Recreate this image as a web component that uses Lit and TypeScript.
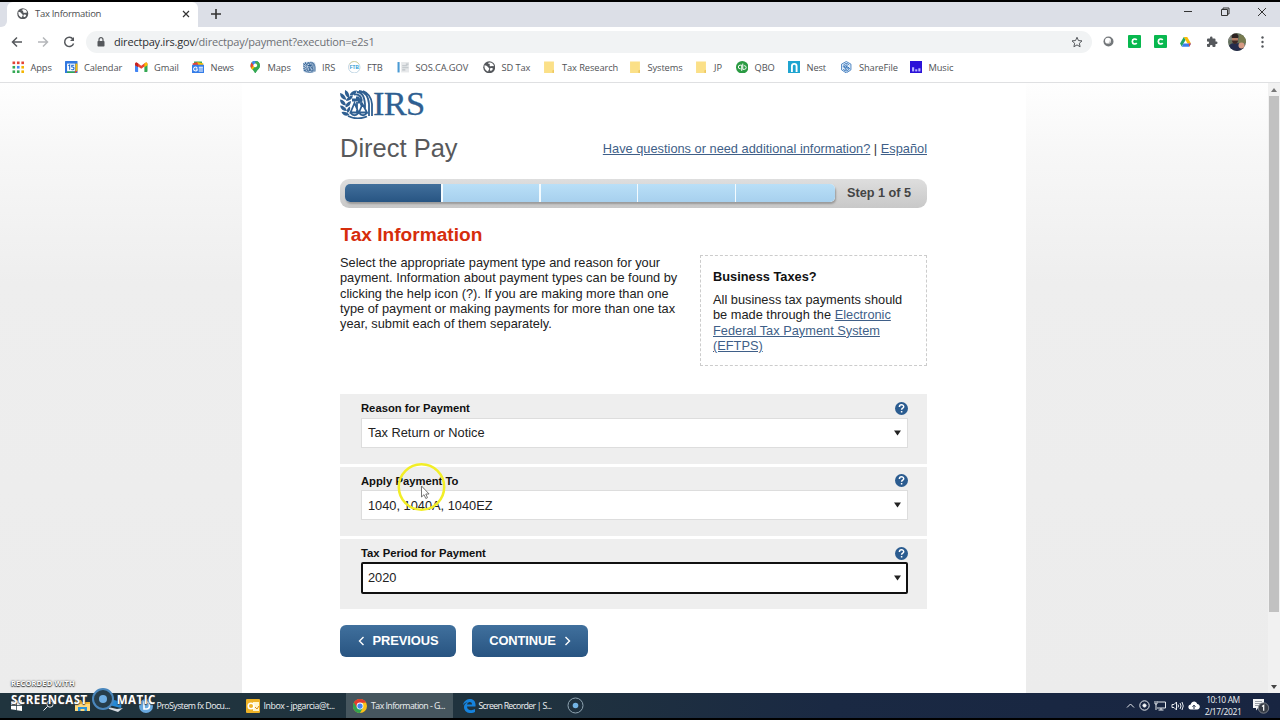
import { LitElement, html, css, svg } from "lit";
import { customElement } from "lit/decorators.js";

const globe = html`<svg viewBox="0 0 24 24"><circle cx="12" cy="12" r="11.5" fill="#55585c"/><path d="M3 8c3 1 5 1 6 3s3 2 3 4-2 2-2 5c-4-1-8-5-7-12zM12 3c4-1 8 2 9 6-2 2-3 0-5 1s-4-1-3-3-3-1-3-2 1-2 2-2z" fill="#fff"/><path d="M14 14c2-1 5 0 5 1s-2 4-4 4-2-4-1-5z" fill="#fff"/></svg>`;
const folder = html`<svg viewBox="0 0 24 24"><path d="M2 1h19v18l-3 4H2z" fill="#fbe088"/><path d="M18 23v-5l3-1v6z" fill="#edc75c"/></svg>`;
const seal = svg`<g fill="#2f5f91"><path d="M0 3q5 1 6.500 7Q0 9 0 3zM5 0q5 2 4 8Q4 6 5 0zM17 .5q-1 5-7.500 5Q11 .5 17 .5zM0 9.500q5 .5 6 6-6-.5-6-6zM13 5.500q-1 5-7 5.500Q7 6 13 5.500zM0 15.500q5 0 7 5.500Q1 21 0 15.500zM11 11q0 5-5.500 6.500Q5 12.500 11 11zM1.500 22q5-1 8 3-5.500 2.500-8-3zM10 16.500q1 4-2.500 6.500-2-4 2.500-6.500z"/><path d="M12 8.500h4V6.500h3l1 2h2.500v3H20v2h-2v-2h-6z"/></g><path d="M17 2q7 0 8 12v5M19 1q9 1 10 13v12M23 1q8 3 9 13v12M14 4.500q5-1 7 3v8M17 12v11M14.500 13L10.500 22.500h8zM22.500 14L19 22.500h8zM10.500 23q4 4.500 8 0M19 23q4 4.500 8 0M8 26q9 4.500 19 .5" fill="none" stroke="#2f5f91" stroke-width="1.800"/>`;

const bookmarks: [string, number, unknown][] = [
  ["Apps", 53.500, html`<svg viewBox="0 0 24 24"><g fill="#e34335"><rect x="1" y="1" width="5" height="5"/><rect x="9.500" y="1" width="5" height="5"/><rect x="18" y="1" width="5" height="5"/></g><rect x="1" y="9.500" width="5" height="5" fill="#33a853"/><rect x="9.500" y="9.500" width="5" height="5" fill="#4285f4"/><rect x="18" y="9.500" width="5" height="5" fill="#f4b400"/><g fill="#f4b400"><rect x="1" y="18" width="5" height="5" fill="#33a853"/><rect x="9.500" y="18" width="5" height="5" fill="#33a853"/><rect x="18" y="18" width="5" height="5"/></g></svg>`],
  ["Calendar", 70, html`<svg viewBox="0 0 24 24"><rect width="24" height="24" rx="1" fill="#3178e0"/><path d="M4 5h15v15H4z" fill="#fff"/><path d="M20 5h4v14h-4z" fill="#fbbc04"/><path d="M4 20h15v4H4z" fill="#34a853"/><path d="M19 19h5l-5 5z" fill="#ea4335"/><path d="M6.500 9l2.500-1.500V17M17.500 8h-4.500v3.500c5.500-1 5.500 5.500 1 5.200l-2-.5" fill="none" stroke="#1967d2" stroke-width="2"/></svg>`],
  ["Gmail", 56.500, html`<svg viewBox="0 0 24 24"><path d="M0 6v13c0 1 1 2 2 2h4V9z" fill="#4285f4"/><path d="M18 9v12h4c1 0 2-1 2-2V6z" fill="#34a853"/><path d="M0 6c0-3 3-4 5-2l7 5 7-5c2-2 5-1 5 2l-12 9z" fill="#ea4335"/><path d="M18 5l1-1c2-2 5-1 5 2v2l-6 4z" fill="#fbbc04"/><path d="M0 6c0-2 2-3 3-3l3 2v7L0 8z" fill="#c5221f"/></svg>`],
  ["News", 57, html`<svg viewBox="0 0 24 24"><path d="M4 1h15l1 8H4z" fill="#34a853"/><path d="M10 2l12 3-2 8H8z" fill="#fbbc04"/><path d="M1 5l9-3 3 8H2z" fill="#ea4335"/><rect y="7" width="24" height="17" rx="1" fill="#357de8"/><path d="M10 13c-3-3-7-1-7 2.500s5 5 7 2v-2H7M13 12h8M13 15.500h8M13 19h8" stroke="#fff" stroke-width="2" fill="none"/></svg>`],
  ["Maps", 54.500, html`<svg viewBox="0 0 24 24"><path d="M12 0C6 0 3 4 3 9c0 6 6 8 9 15 3-7 9-9 9-15 0-5-3-9-9-9z" fill="#34a853"/><path d="M5 3l5 5-6 6C2 10 3 6 5 3z" fill="#ea4335"/><path d="M5 3c3-4 8-4 12-2l-7 8z" fill="#4285f4"/><path d="M4 14l11-12c5 3 3 4-1 7l-8 8z" fill="#fbbc04"/><path d="M12 0c6 0 9 4 9 9 0 6-6 8-9 15l-1-3z" fill="#34a853" opacity=".85"/><circle cx="12" cy="8.500" r="3.500" fill="#fff"/></svg>`],
  ["IRS", 45, html`<svg viewBox="0 0 33 29"><rect width="33" height="29" rx="9" fill="#c5d5e8"/>${seal}</svg>`],
  ["FTB", 48.500, html`<svg viewBox="0 0 24 24"><circle cx="12" cy="12" r="11" fill="#fff" stroke="#aecbdc" stroke-width="1.500"/><path d="M3 6c4-7 14-7 18 0" fill="none" stroke="#d8cf8d" stroke-width="1.500"/><text x="12" y="15.500" text-anchor="middle" font-size="9" font-weight="bold" font-family="Liberation Sans, sans-serif" fill="#2797d2">FTB</text></svg>`],
  ["SOS.CA.GOV", 86, html`<svg viewBox="0 0 24 24"><path d="M1 2h4v20H1z" fill="#4a9ad4"/><path d="M8 2h15v20H8z" fill="#e6e8ea"/><path d="M10 9h10M10 13h12M10 17h6M17 6h5" stroke="#bcc1c6" stroke-width="2"/></svg>`],
  ["SD Tax", 60.500, globe],
  ["Tax Research", 85.500, folder],
  ["Systems", 66.500, folder],
  ["JP", 40.500, folder],
  ["QBO", 52, html`<svg viewBox="0 0 24 24"><circle cx="12" cy="12" r="12" fill="#2b9b43"/><path d="M11 8v11M11 8H8a3.500 3.500 0 000 7h1M13 16V5M13 16h3a3.500 3.500 0 000-7h-1" fill="none" stroke="#fff" stroke-width="1.900"/></svg>`],
  ["Nest", 52.500, html`<svg viewBox="0 0 24 24"><rect width="24" height="24" fill="#1fa4d0"/><path d="M7.500 21V10a4.500 4.500 0 019 0v11" fill="none" stroke="#fff" stroke-width="3.600"/></svg>`],
  ["ShareFile", 69.500, html`<svg viewBox="0 0 24 24"><path d="M12 1l9 5v11l-9 6-9-6V6z" fill="#e6f1fb" stroke="#2669b4" stroke-width="1.500"/><path d="M17.500 8c-2-4-10-4-10 .5 0 5 9 3 9 7.500 0 4-8 4-10 0M14.500 9c-2-2-4-1-4 0 0 2 8 2.500 8 6.500M6 10c0 3 7 4 7 6 0 1-2 1.500-4 0" fill="none" stroke="#2669b4" stroke-width="1.800"/></svg>`],
  ["Music", 60, html`<svg viewBox="0 0 24 24"><rect width="24" height="24" fill="#2b12d8"/><g fill="#b9b4ff"><rect x="4" y="12" width="4" height="8"/><rect x="10" y="16" width="4" height="4"/><rect x="16" y="14" width="4" height="6"/></g></svg>`],
];

const fields: [string, string][] = [
  ["Reason for Payment", "Tax Return or Notice"],
  ["Apply Payment To", "1040, 1040A, 1040EZ"],
  ["Tax Period for Payment", "2020"],
];

const greenC = html`<svg class="gc" viewBox="0 0 13 13"><rect width="13" height="13" rx="1" fill="#08b84f"/><path d="M8.700 5C7.500 3.300 4.300 3.800 4.300 6.500s3.200 3.200 4.400 1.500" fill="none" stroke="#fff" stroke-width="1.700"/></svg>`;

@customElement("app-root")
export class AppRoot extends LitElement {
  static styles = css`
    :host { display: block; width: 1280px; height: 720px; }
    * { box-sizing: border-box; }
    svg { display: block; flex: none; }
    .screen { position: relative; width: 1280px; height: 720px; overflow: hidden; display: flex; flex-direction: column; background: #000; padding: 2px 0; font-family: "Open Sans", "Noto Sans", sans-serif; }
    .tabs { height: 25px; flex: none; background: #dcdfe7; display: flex; align-items: stretch; }
    .edge { width: 7px; background: #dcdfe7; border-radius: 0 0 6px 0; }
    .edgewrap { background: #fff; width: 7px; display: flex; }
    .tab { width: 191px; background: #fff; border-radius: 6px 6px 0 0; display: flex; align-items: center; padding: 0 7px 2px 10px; color: #4b4d50; font-size: 9.500px; letter-spacing: -0.300px; }
    .tab svg { width: 11.500px; height: 11.500px; }
    .tab span { margin-left: 6.500px; flex: 1; }
    .tab .x, .tabs .plus, .win svg { width: 10px; height: 10px; fill: none; stroke: #333; stroke-width: 1.200; }
    .tabs .plus { width: 12px; height: 12px; margin: 5.500px 0 0 12px; stroke-width: 1.600; }
    .win { margin-left: auto; display: flex; gap: 27px; padding: 5px 13px 0 0; }
    .win svg { stroke-width: 1; }
    .toolbar { height: 30px; flex: none; background: #fff; display: flex; align-items: center; padding: 0 12px 1px 11px; }
    .nav { width: 12px; height: 12px; fill: none; stroke: #55585c; stroke-width: 1.500; margin-right: 14px; }
    .nav.off { stroke: #b5b7ba; }
    .nav.reload { margin-right: 11px; }
    .omni { flex: none; width: 1006px; height: 22px; border-radius: 11px; background: #f1f3f4; display: flex; align-items: center; padding: 0 9px 0 11px; margin-right: 5px; font-size: 11px; color: #6d7074; letter-spacing: -0.200px; }
    .omni b { font-weight: normal; color: #2c2e31; }
    .omni .url { margin-left: 9px; flex: 1; }
    .ext { display: flex; align-items: center; }
    .ext .ball { margin: 0 14px 0 6px; }
    .ext .drive { margin: 0 15px 0 1px; }
    .ext .puzzle { margin-right: 10px; }
    .ext .dots { margin-left: 14px; }
    .gc { width: 13px; height: 13px; margin-right: 12.500px; }
    .marks { height: 25px; flex: none; background: #fff; display: flex; align-items: center; padding-left: 11.500px; padding-bottom: 5px; font-size: 9.300px; color: #505256; letter-spacing: -0.1px; }
    .mark { flex: none; display: flex; align-items: center; gap: 6.500px; white-space: nowrap; }
    .mark svg { width: 12.500px; height: 12.500px; }
    .view { height: 611px; flex: none; border-top: 1px solid #dfe0e2; display: flex; background: linear-gradient(#fefefe 0, #f7f7f7 70px, #eeeeee 200px, #ececec 100%); }
    .page { width: 784px; margin-left: 242px; background: #fff; padding: 7px 99px 0 98px; font-family: "Liberation Sans", Arial, sans-serif; font-size: 12.800px; line-height: 15.350px; color: #222; letter-spacing: 0; }
    a { color: #3f5f88; text-decoration: underline; }
    .logo { display: flex; height: 29px; }
    .logo span { font: 34.500px/27px "Liberation Serif", serif; color: #2f5f91; letter-spacing: -0.700px; -webkit-text-stroke: .3px #2f5f91; }
    .top { height: 59px; display: flex; justify-content: space-between; align-items: center; color: #333; }
    h1 { margin: 0; padding-bottom: 2px; font-size: 25.500px; line-height: 30px; font-weight: normal; color: #58595b; }
    .steps { height: 29px; margin-top: 1px; border-radius: 9px; background: linear-gradient(#dedede, #c8c8c8); display: flex; align-items: center; padding: 0 0 1px 5px; font-weight: bold; font-size: 12.700px; color: #444; }
    .steps span { padding-top: 2px; }
    .bar { width: 490px; height: 18px; display: flex; gap: 1.600px; background: #f4fbfe; border-radius: 5px; overflow: hidden; }
    .shadow { border-radius: 5px; box-shadow: 1px 2px 2px #999; margin-right: 12px; }
    .bar i { flex: none; width: 96.200px; background: linear-gradient(#b9dff7, #a7d0ee); }
    .bar i:last-child { flex: 1; }
    .bar i:first-child { background: linear-gradient(#416f9b, #285583); }
    h2 { margin: 15px 0 0 .5px; font-size: 19.100px; line-height: 24px; color: #d62d0c; }
    .intro { display: flex; justify-content: space-between; margin-top: 8px; height: 111px; }
    .intro p { margin: .1px 0 0; width: 345px; white-space: nowrap; }
    .biz { width: 227px; height: 111px; border: 1px dashed #ccc; padding: 13px 12px; white-space: nowrap; }
    .biz h3 { margin: 0 0 7.500px; font-size: 12.800px; line-height: 15.500px; color: #111; }
    .form { margin-top: 28px; display: flex; flex-direction: column; gap: 3px; }
    .field { height: 69.700px; background: #eee; padding: 6px 19px 0 21px; }
    .lab { height: 17.500px; display: flex; justify-content: space-between; align-items: center; font-weight: bold; font-size: 11.250px; color: #111; }
    .lab svg { width: 13px; height: 13px; margin-bottom: 1px; }
    .sel { height: 30px; border: 1px solid #ddd; background: #fff; display: flex; justify-content: space-between; align-items: center; padding: 0 6px; }
    .sel svg { width: 7px; height: 6px; }
    .sel.focus { height: 32px; margin-top: -1px; border: 2px solid #111; border-radius: 2px; padding: 0 5px; }
    .btns { display: flex; gap: 16px; margin-top: 16px; }
    .btn { width: 116px; height: 32px; border-radius: 6px; background: linear-gradient(#40709d, #285481); color: #fff; font-weight: bold; font-size: 12.900px; letter-spacing: -0.100px; display: flex; align-items: center; justify-content: center; gap: 8px; }
    .btn svg { width: 7px; height: 10px; fill: none; stroke: #fff; stroke-width: 1.400; }
    .scroll { margin-left: auto; width: 12px; background: #f1f1f1; display: flex; flex-direction: column; align-items: center; padding: 5px 0 4px; }
    .scroll svg { width: 6px; height: 4px; fill: #777; }
    .thumb { width: 10px; height: 516px; margin-top: 4px; margin-bottom: auto; background: #c1c1c1; }
    .task { height: 25px; flex: none; background: linear-gradient(90deg, #20343e 0, #20333e 40%, #1a2943 65%, #182541 100%); display: flex; align-items: center; color: #eef1f3; font-size: 8.800px; letter-spacing: -0.550px; white-space: nowrap; }
    .app { height: 25px; flex: none; display: flex; align-items: center; gap: 4px; }
    .app svg { width: 14px; height: 14px; }
    .ic { fill: none; stroke: #e7eaee; stroke-width: 1; }
    .s1 { margin-left: 11px; width: 11px; height: 11px; }
    .s2 { margin-left: 21px; width: 11px; height: 11px; }
    .s3 { margin-left: 21px; width: 15px; height: 13px; }
    .s4 { margin-left: 17px; width: 17px; height: 15px; }
    .a1 { margin-left: 14.500px; width: 107px; }
    .a2 { width: 100.500px; letter-spacing: -0.450px; }
    .a3 { width: 107px; background: #46565e; padding-left: 7px; }
    .a4 { margin-left: 8.500px; width: 105px; gap: 3px; letter-spacing: -0.720px; }
    .tray { margin-left: auto; display: flex; align-items: center; gap: 4.300px; padding-right: 10px; }
    .clock { width: 42px; text-align: center; line-height: 12px; margin: 0 3.700px 0 -2.300px; font-size: 8.500px; letter-spacing: -0.400px; display: flex; flex-direction: column; align-items: center; }
    .mouse { position: absolute; left: 396px; top: 461px; width: 50px; height: 52px; }
    .wm { position: absolute; left: 11px; top: 678px; color: #fff; font-family: "Open Sans", sans-serif; font-weight: bold; text-shadow: 0 0 2px #333, 0 1px 1px #444; }
    .wm .r { font-size: 7.500px; line-height: 11px; letter-spacing: 0.150px; }
    .wm .l { display: flex; align-items: center; height: 20px; font-size: 11.500px; letter-spacing: 0.500px; }
    .wm svg { width: 24px; height: 24px; margin: 0 2px 0 3px; }
  `;

  render() {
    return html`<div class="screen">
      <div class="tabs">
        <div class="edgewrap"><div class="edge"></div></div>
        <div class="tab">${globe}<span>Tax Information</span><svg class="x" viewBox="0 0 10 10"><path d="M2 2l6 6M8 2L2 8"/></svg></div>
        <svg class="plus" viewBox="0 0 12 12"><path d="M6 1v10M1 6h10"/></svg>
        <div class="win">
          <svg viewBox="0 0 10 10"><path d="M1 4.500h8"/></svg>
          <svg viewBox="0 0 10 10"><path d="M1.500 2.500h6v6h-6zM3 2.500V1h6v6H7.500"/></svg>
          <svg viewBox="0 0 10 10"><path d="M1 1l8 8M9 1L1 9"/></svg>
        </div>
      </div>
      <div class="toolbar">
        <svg class="nav" viewBox="0 0 12 12"><path d="M11 6H1.500M6 1.500L1.500 6 6 10.500"/></svg>
        <svg class="nav off" viewBox="0 0 12 12"><path d="M1 6h9.500M6 1.500L10.500 6 6 10.500"/></svg>
        <svg class="nav reload" viewBox="0 0 12 12"><path d="M10 3.200A4.600 4.600 0 1010.600 7.500"/><path d="M11 1v4H7z" fill="#55585c" stroke="none"/></svg>
        <div class="omni">
          <svg width="8" height="10" viewBox="0 0 8 10"><rect x=".5" y="4" width="7" height="5.500" rx=".7" fill="#55585c"/><path d="M2 4V2.700a2 2 0 014 0V4" fill="none" stroke="#55585c" stroke-width="1.200"/></svg>
          <span class="url"><b>directpay.irs.gov</b>/directpay/payment?execution=e2s1</span>
          <svg width="12" height="12" viewBox="0 0 24 24"><path d="M12 2.500l2.900 6.600 7.100.7-5.300 4.700 1.500 7-6.200-3.700-6.200 3.700 1.500-7L2 9.800l7.100-.7z" fill="none" stroke="#55585c" stroke-width="2"/></svg>
        </div>
        <div class="ext">
          <svg class="ball" width="11" height="11" viewBox="0 0 11 11"><circle cx="5.500" cy="5.500" r="5" fill="#73777a"/><circle cx="5" cy="4.700" r="3" fill="#fff"/><path d="M7 4.500a2.500 2.500 0 01-3 3" fill="none" stroke="#bbb"/></svg>
          ${greenC}${greenC}
          <svg class="drive" width="11" height="10" viewBox="0 0 22 20"><path d="M7.500 0h7L22 13h-7z" fill="#fbbc04"/><path d="M7.500 0L0 13l3.500 6L11 6z" fill="#21a464"/><path d="M7 13h15l-3.500 6.500h-15z" fill="#3b7ded"/><path d="M17 13h5l-3.500 6.500z" fill="#ea4335"/></svg>
          <svg class="puzzle" width="12" height="12" viewBox="0 0 24 24"><path d="M20.500 11H19V7a2 2 0 00-2-2h-4V3.500a2.500 2.500 0 00-5 0V5H4a2 2 0 00-2 2v3.800h1.500a2.700 2.700 0 010 5.400H2V20a2 2 0 002 2h3.800v-1.500a2.700 2.700 0 015.400 0V22H17a2 2 0 002-2v-4h1.500a2.500 2.500 0 000-5z" fill="#55585c"/></svg>
          <svg width="18" height="18" viewBox="0 0 18 18"><defs><clipPath id="av"><circle cx="9" cy="9" r="9"/></clipPath></defs><g clip-path="url(#av)"><rect width="18" height="18" fill="#667260"/><path d="M0 0h7v7H0z" fill="#85877f"/><path d="M11 2h7v8h-7z" fill="#777b50"/><path d="M0 18c0-7 3-8 8-8s8 3 8 8z" fill="#252c4c"/><ellipse cx="7" cy="6" rx="3" ry="4.500" fill="#b57f66"/><path d="M3.500 4c0-5 7-5 7 0L10 5H4z" fill="#2c2322"/><path d="M4 7.500h6c0 4.500-6 4.500-6 0z" fill="#3c2926"/><circle cx="13.500" cy="12.500" r="3" fill="#d79b84"/></g></svg>
          <svg class="dots" width="5" height="12" viewBox="0 0 5 12"><g fill="#55585c"><circle cx="2.500" cy="1.500" r="1.200"/><circle cx="2.500" cy="6" r="1.200"/><circle cx="2.500" cy="10.500" r="1.200"/></g></svg>
        </div>
      </div>
      <div class="marks">${bookmarks.map(([t, w, icon]) => html`<div class="mark" style="width:${w}px">${icon}<span>${t}</span></div>`)}</div>
      <div class="view">
        <div class="page">
          <div class="logo"><svg width="33" height="29" viewBox="0 0 33 29">${seal}</svg><span>IRS</span></div>
          <div class="top"><h1>Direct Pay</h1><span class="help"><a>Have questions or need additional information?</a> | <a>Español</a></span></div>
          <div class="steps"><div class="shadow"><div class="bar"><i></i><i></i><i></i><i></i><i></i></div></div><span>Step 1 of 5</span></div>
          <h2>Tax Information</h2>
          <div class="intro">
            <p>Select the appropriate payment type and reason for your<br>payment. Information about payment types can be found by<br>clicking the help icon (?). If you are making more than one<br>type of payment or making payments for more than one tax<br>year, submit each of them separately.</p>
            <div class="biz"><h3>Business Taxes?</h3>All business tax payments should<br>be made through the <a>Electronic<br>Federal Tax Payment System<br>(EFTPS)</a></div>
          </div>
          <div class="form">${fields.map(([l, v], i) => html`<div class="field">
            <div class="lab"><span>${l}</span><svg viewBox="0 0 13 13"><circle cx="6.500" cy="6.500" r="6.500" fill="#2b5c90"/><path d="M4.400 5c0-3 4.300-2.800 4.300-.3 0 1.500-2.100 1.500-2.100 3.100M6.600 8.900v1.500" fill="none" stroke="#fff" stroke-width="1.500"/></svg></div>
            <div class="sel ${i === 2 ? "focus" : ""}"><span>${v}</span><svg viewBox="0 0 7 6"><path d="M0 .5h7L3.500 5.500z" fill="#222"/></svg></div>
          </div>`)}</div>
          <div class="btns">
            <div class="btn"><svg viewBox="0 0 7 10"><path d="M5.500 1l-4 4 4 4"/></svg>PREVIOUS</div>
            <div class="btn">CONTINUE<svg viewBox="0 0 7 10"><path d="M1.500 1l4 4-4 4"/></svg></div>
          </div>
        </div>
        <div class="scroll"><svg viewBox="0 0 6 4"><path d="M0 4l3-4 3 4z"/></svg><div class="thumb"></div><svg viewBox="0 0 6 4"><path d="M0 0l3 4 3-4z" fill="#444"/></svg></div>
      </div>
      <div class="task">
        <svg class="s1" viewBox="0 0 11 11"><path d="M0 1.500l5-.7V5H0zM5.700.7L11 0v5H5.700zM0 5.800h5V10l-5-.7zM5.700 5.800H11V11l-5.300-.8z" fill="#fff"/></svg>
        <svg class="s2 ic" viewBox="0 0 11 11"><circle cx="7" cy="4" r="3.200"/><path d="M4.500 6.500L.5 10.500"/></svg>
        <svg class="s3" viewBox="0 0 15 13"><path d="M0 1h6l1 2h8v9H0z" fill="#f2b632"/><path d="M0 5h15v7H0z" fill="#ffd97a"/><path d="M3 12V8h9v4h-2.500v-2h-4v2z" fill="#2993d8"/></svg>
        <svg class="s4" viewBox="0 0 17 15"><path d="M3 1l12 3-1 6L2 7z" fill="#268ad6"/><path d="M1 9l9 2 6-1-5 4-9-3z" fill="#d6dce2"/></svg>
        <div class="app a1"><svg viewBox="0 0 14 14"><circle cx="7" cy="7" r="7" fill="#69a9df"/><path d="M5 3h2.500c4 0 4 7 0 7H5z" fill="none" stroke="#fff" stroke-width="1.600"/></svg><span>ProSystem fx Docu...</span></div>
        <div class="app a2"><svg viewBox="0 0 14 14"><rect width="14" height="14" rx="1" fill="#eeb227"/><path d="M7 3h6v9H7z" fill="#fff5ce"/><circle cx="5" cy="7" r="2.800" fill="none" stroke="#fff" stroke-width="1.500"/><path d="M9 8l2 2 2-3" stroke="#dc8b19" fill="none"/></svg><span>Inbox - jpgarcia@t...</span></div>
        <div class="app a3"><svg viewBox="0 0 24 24"><circle cx="12" cy="12" r="12" fill="#fbc116"/><path d="M1.600 6A12 12 0 0012 24l5-9-5-3z" fill="#31a350"/><path d="M1.600 6A12 12 0 0122.400 6L12 7l-5 8z" fill="#e33b2e"/><circle cx="12" cy="12" r="5.800" fill="#fff"/><circle cx="12" cy="12" r="4.500" fill="#4285f4"/></svg><span>Tax Information - G...</span></div>
        <div class="app a4"><svg viewBox="0 0 14 14"><path d="M1 6C2 1 6 0 8 0c4 0 6 3 5.500 7.500H5c0 4 5 4.500 8 2.500v3c-5 2.500-11 .5-11-5 0-2 1-4 4-5-3 .5-4 2-5 3zM5 5.500h5C10 2 5.500 2.500 5 5.500z" fill="#1683dd"/></svg><span>Screen Recorder | S...</span></div>
        <svg width="17" height="17" viewBox="0 0 17 17"><circle cx="8.500" cy="8.500" r="7.500" fill="none" stroke="#8fa4b1"/><circle cx="8.500" cy="8.500" r="2.800" fill="#73b4e5"/></svg>
        <div class="tray">
          <svg class="ic" width="9" height="9" viewBox="0 0 9 9"><path d="M1 6.500L4.500 3 8 6.500"/></svg>
          <svg class="ic" width="11" height="11" viewBox="0 0 11 11"><circle cx="5.500" cy="5.500" r="4.700"/><circle cx="5.500" cy="5.500" r="1.600" fill="#fff"/></svg>
          <svg class="ic" width="12" height="11" viewBox="0 0 12 11"><path d="M3.500 2h8v6H3M7 8v2M4.500 10h5M1 1v3h2V1M2 4v6"/></svg>
          <svg class="ic" width="13" height="10" viewBox="0 0 13 10"><path d="M1 3.500h2l2.500-2.500v8L3 6.500H1zM7 3.500q1 1.500 0 3M9 2q2 3 0 6M11 1q2.500 4 0 8"/></svg>
          <svg width="12" height="9" viewBox="0 0 12 9"><path d="M3 8.500a2.500 2.500 0 01-.3-5C3.500-.5 8.500-.5 9.200 3c3.500.2 3.500 5.500 0 5.500z" fill="#fff"/><path d="M6 8V4.500M4.500 5.700L6 4.200l1.500 1.500" stroke="#1a2943" fill="none"/></svg>
          <div class="clock"><span>10:10 AM</span><span>2/17/2021</span></div>
          <svg width="18" height="17" viewBox="0 0 18 17"><path d="M1 2h11v9H6l-2 2.500V11H1z" fill="#f3f4f5"/><path d="M3 4.500h7M3 6.500h7M3 8.500h4" stroke="#9aa0a8"/><circle cx="11.500" cy="11" r="5.200" fill="#353b45" stroke="#8c9098" stroke-width=".8"/><path d="M10 9.500l1.700-1.200v5.500" fill="none" stroke="#fff" stroke-width="1.200"/></svg>
        </div>
      </div>
      <svg class="mouse" viewBox="0 0 50 52"><circle cx="25.500" cy="26" r="22.700" fill="none" stroke="#f2ee27" stroke-width="2.500"/><path d="M25.500 25v11l2.500-2.300 1.800 3.800 1.700-.8-1.700-3.700h3.300z" fill="#fff" stroke="#666" stroke-width=".9"/></svg>
      <div class="wm"><div class="r">RECORDED WITH</div><div class="l"><span>SCREENCAST</span><svg viewBox="0 0 24 24"><circle cx="12" cy="12" r="10" fill="#263e4c" stroke="#4a87bd" stroke-width="2"/><circle cx="12" cy="12" r="4" fill="#6eaee4"/></svg><span>MATIC</span></div></div>
    </div>`;
  }
}
